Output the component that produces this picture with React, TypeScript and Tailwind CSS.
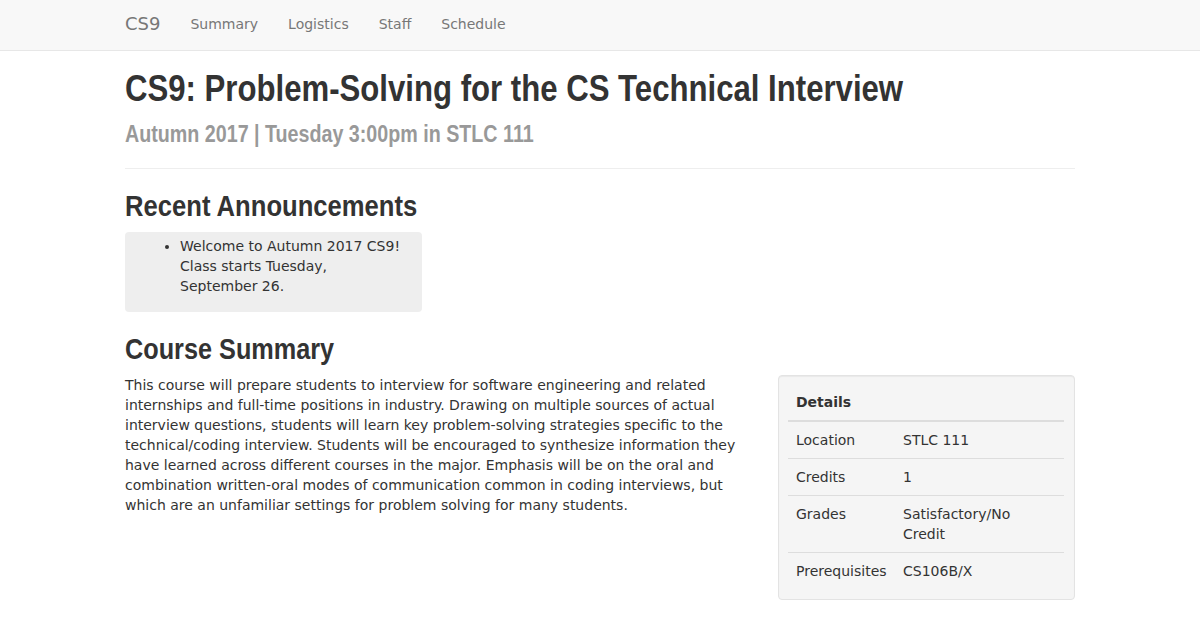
const head = "font-['Liberation_Sans',Arial,sans-serif] font-bold text-[#333] whitespace-nowrap origin-left"

const details = [
  { label: 'Location', value: 'STLC 111' },
  { label: 'Credits', value: '1' },
  { label: 'Grades', value: 'Satisfactory/No Credit' },
  { label: 'Prerequisites', value: 'CS106B/X' },
]

export default function App() {
  return (
    <div className="min-h-screen bg-white text-[14px] leading-[20px] text-[#333] font-['DejaVu_Sans',sans-serif]">
      {/* Navbar */}
      <nav className="h-[51px] bg-[#f8f8f8] border-b border-[#e7e7e7]">
        <div className="w-[950px] mx-auto flex items-center h-[48px]">
          <span className="text-[18px] text-[#777] pr-[15px]">CS9</span>
          {['Summary', 'Logistics', 'Staff', 'Schedule'].map(l => (
            <span key={l} className="px-[15px] text-[#777]">{l}</span>
          ))}
        </div>
      </nav>

      <div className="w-[950px] mx-auto">
        {/* Header */}
        <div className="pt-[18px] pb-[21px] border-b border-[#eee]">
          <h1 className={`${head} text-[36px] leading-[40px] scale-x-[0.865]`}>CS9: Problem-Solving for the CS Technical Interview</h1>
          <h2 className={`${head} text-[24px] leading-[26px] text-[#999] scale-x-[0.82] mt-[12px]`}>Autumn 2017 | Tuesday 3:00pm in STLC 111</h2>
        </div>

        {/* Announcements */}
        <h2 className={`${head} text-[30px] leading-[33px] scale-x-[0.854] mt-[20px]`}>Recent Announcements</h2>
        <div className="w-[297px] bg-[#eee] rounded-[4px] mt-[10px] pt-[4px] pb-[16px]">
          <ul className="list-disc pl-[55px] pr-[15px]">
            <li>Welcome to Autumn 2017 CS9! Class starts Tuesday, September 26.</li>
          </ul>
        </div>

        {/* Course summary */}
        <h2 className={`${head} text-[30px] leading-[33px] scale-x-[0.842] mt-[20px]`}>Course Summary</h2>
        <div className="flex gap-[30px]">
          <p className="w-[623px] mt-[10px]">
            This course will prepare students to interview for software engineering and related internships and full-time positions in industry. Drawing on multiple sources of actual interview questions, students will learn key problem-solving strategies specific to the technical/coding interview. Students will be encouraged to synthesize information they have learned across different courses in the major. Emphasis will be on the oral and combination written-oral modes of communication common in coding interviews, but which are an unfamiliar settings for problem solving for many students.
          </p>
          <div className="w-[297px] mt-[10px] bg-[#f5f5f5] border border-[#e3e3e3] rounded-[4px] shadow-[inset_0_1px_1px_rgba(0,0,0,0.05)] pl-[9px] pr-[10px] pt-[8px] pb-[10px]">
            <table className="w-full">
              <thead>
                <tr className="border-b-2 border-[#ddd]">
                  <th className="text-left font-bold p-[8px]" colSpan={2}>Details</th>
                </tr>
              </thead>
              <tbody>
                {details.map((d, i) => (
                  <tr key={d.label} className={i > 0 ? 'border-t border-[#ddd]' : ''}>
                    <td className="p-[8px] align-top w-[107px]">{d.label}</td>
                    <td className="p-[8px] align-top">
                      <div className="max-w-[140px]">{d.value}</div>
                    </td>
                  </tr>
                ))}
              </tbody>
            </table>
          </div>
        </div>
      </div>
    </div>
  )
}
